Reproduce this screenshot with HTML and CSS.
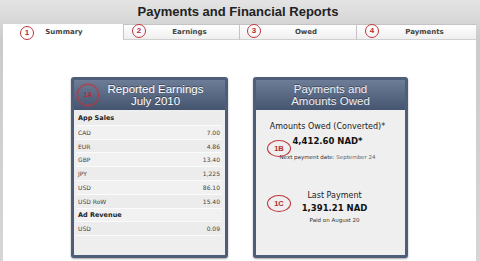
FILE: index.html
```html
<html><head>
  <title>Payments and Financial Reports</title>
  <link rel="stylesheet" href="styles.css">
</head>
<body>
  <div class="window">
    <div class="titlebar">Payments and Financial Reports</div>

    <div class="tabs">
      <div class="tab active">Summary</div>
      <div class="tab">Earnings</div>
      <div class="tab">Owed</div>
      <div class="tab">Payments</div>
    </div>

    <div class="content">
      <div class="card">
        <div class="card-header">Reported Earnings<br>July 2010</div>
        <div class="card-body">
          <div class="row group">App Sales</div>
          <div class="row"><span>CAD</span><span>7.00</span></div>
          <div class="row"><span>EUR</span><span>4.86</span></div>
          <div class="row"><span>GBP</span><span>13.40</span></div>
          <div class="row"><span>JPY</span><span>1,225</span></div>
          <div class="row"><span>USD</span><span>86.10</span></div>
          <div class="row"><span>USD RoW</span><span>15.40</span></div>
          <div class="row group">Ad Revenue</div>
          <div class="row"><span>USD</span><span>0.09</span></div>
        </div>
      </div>

      <div class="card right">
        <div class="card-header">Payments and<br>Amounts Owed</div>
        <div class="card-body owed">
          <div class="owed-block">
            <div class="owed-label">Amounts Owed (Converted)*</div>
            <div class="owed-amount">4,412.60 NAD*</div>
            <div class="owed-note">Next payment date: <span class="light">September 24</span></div>
          </div>
          <div class="owed-block last">
            <div class="owed-label">Last Payment</div>
            <div class="owed-amount">1,391.21 NAD</div>
            <div class="owed-note">Paid on August 20</div>
          </div>
        </div>
      </div>
    </div>

    <!-- red annotation marks -->
    <div class="mark m1">1</div>
    <div class="mark m2">2</div>
    <div class="mark m3">3</div>
    <div class="mark m4">4</div>
    <div class="mark big m1a">1A</div>
    <div class="mark oval m1b">1B</div>
    <div class="mark oval m1c">1C</div>
  </div>
</body></html>
```

FILE: styles.css
```css
* {
  margin: 0;
  padding: 0;
  box-sizing: border-box;
}

body {
  background: #fff;
  font-family: 'DejaVu Sans', Verdana, sans-serif;
}

.window {
  position: relative;
  width: 480px;
  height: 261px;
  display: flex;
  flex-direction: column;
  background: linear-gradient(#e4e4e4, #cbcbcb 40px, #d6d6d6);
  overflow: hidden;
}

.titlebar {
  height: 24px;
  line-height: 24px;
  text-align: center;
  font-family: 'Liberation Sans', Arial, sans-serif;
  font-weight: bold;
  font-size: 13px;
  color: #222;
  padding-right: 4px;
}

.tabs {
  display: grid;
  grid-template-columns: 120px 116px 117px 120px;
  margin: 0 4px 0 3px;
  height: 16px;
}

.tab {
  background: linear-gradient(#ffffff, #efefef);
  border: 1px solid #c4c4c4;
  border-bottom-color: #d0d0d0;
  border-right: none;
  font-size: 7px;
  font-weight: bold;
  color: #444;
  text-align: center;
  line-height: 14px;
  padding-left: 16px;
}

.tab.active {
  background: #fff;
  border: none;
  border-top: 1px solid #fff;
  padding-right: 14px;
}

.content {
  flex: 1;
  background: #fff;
  margin: 0 4px 0 3px;
  display: flex;
  justify-content: center;
  align-items: flex-start;
  gap: 25px;
  padding-top: 37px;
}

.card {
  width: 157px;
  height: 181px;
  border: 3px solid #4e5d78;
  border-radius: 3px;
  background: #4e5d78;
  display: flex;
  flex-direction: column;
  box-shadow: 0 1px 2px rgba(0,0,0,0.35);
}

.card.right {
  width: 155px;
}

.card-header {
  height: 30px;
  background: linear-gradient(#6d7d98, #45546f);
  color: #fff;
  text-align: center;
  font-family: 'Liberation Sans', Arial, sans-serif;
  font-size: 11.5px;
  line-height: 11.5px;
  padding-top: 4px;
  padding-left: 12px;
  text-shadow: 0 -1px 0 rgba(0,0,0,0.4);
}

.card.right .card-header {
  padding-left: 0;
  color: #eef0f5;
}

.card-body {
  flex: 1;
  background: #eeeeee;
  padding: 2px 3px 0 2px;
}

.row {
  display: flex;
  justify-content: space-between;
  height: 13.8px;
  line-height: 13px;
  font-size: 6px;
  color: #444;
  padding: 0 2px 0 2px;
  border-bottom: 1px solid #fbfbfb;
  background: #ececec;
}

.row:nth-child(even) {
  background: #f1f1f1;
}

.row.group {
  font-weight: bold;
  font-size: 6.5px;
  color: #222;
}

.card-body.owed {
  background: #efefef;
  padding: 0;
  text-align: center;
}

.owed-block {
  padding-top: 9.5px;
  padding-right: 6px;
}

.owed-label {
  font-size: 8px;
  color: #222;
  line-height: 13px;
}

.owed-amount {
  font-size: 8.5px;
  font-weight: bold;
  color: #111;
  line-height: 16px;
}

.owed-note {
  font-size: 5.5px;
  color: #333;
  line-height: 16px;
}

.owed-note .light {
  color: #666;
}

.owed-block.last {
  padding-top: 24px;
  padding-right: 0;
  padding-left: 8px;
}

.last .owed-amount {
  line-height: 13px;
}

.last .owed-note {
  line-height: 11px;
}

.mark {
  position: absolute;
  width: 14px;
  height: 14px;
  border: 1.3px solid #c0353e;
  border-radius: 50%;
  color: #b52a33;
  font-family: 'Liberation Sans', Arial, sans-serif;
  font-size: 8px;
  font-weight: bold;
  text-align: center;
  line-height: 12px;
  background: rgba(255,255,255,0.3);
}

.m1 { left: 20px; top: 26px; }
.m2 { left: 132px; top: 24px; }
.m3 { left: 247px; top: 24px; }
.m4 { left: 365px; top: 24px; }

.big {
  width: 22px;
  height: 22px;
  line-height: 20px;
  font-size: 7px;
  background: none;
  border-width: 1.5px;
  box-shadow: 0 0 0 1px rgba(192,53,62,0.35);
}

.m1a { left: 77px; top: 84px; }

.oval {
  width: 24px;
  height: 17px;
  line-height: 15px;
  font-size: 7.5px;
  background: none;
}

.m1b { left: 267px; top: 140px; }
.m1c { left: 267px; top: 195px; }
```
